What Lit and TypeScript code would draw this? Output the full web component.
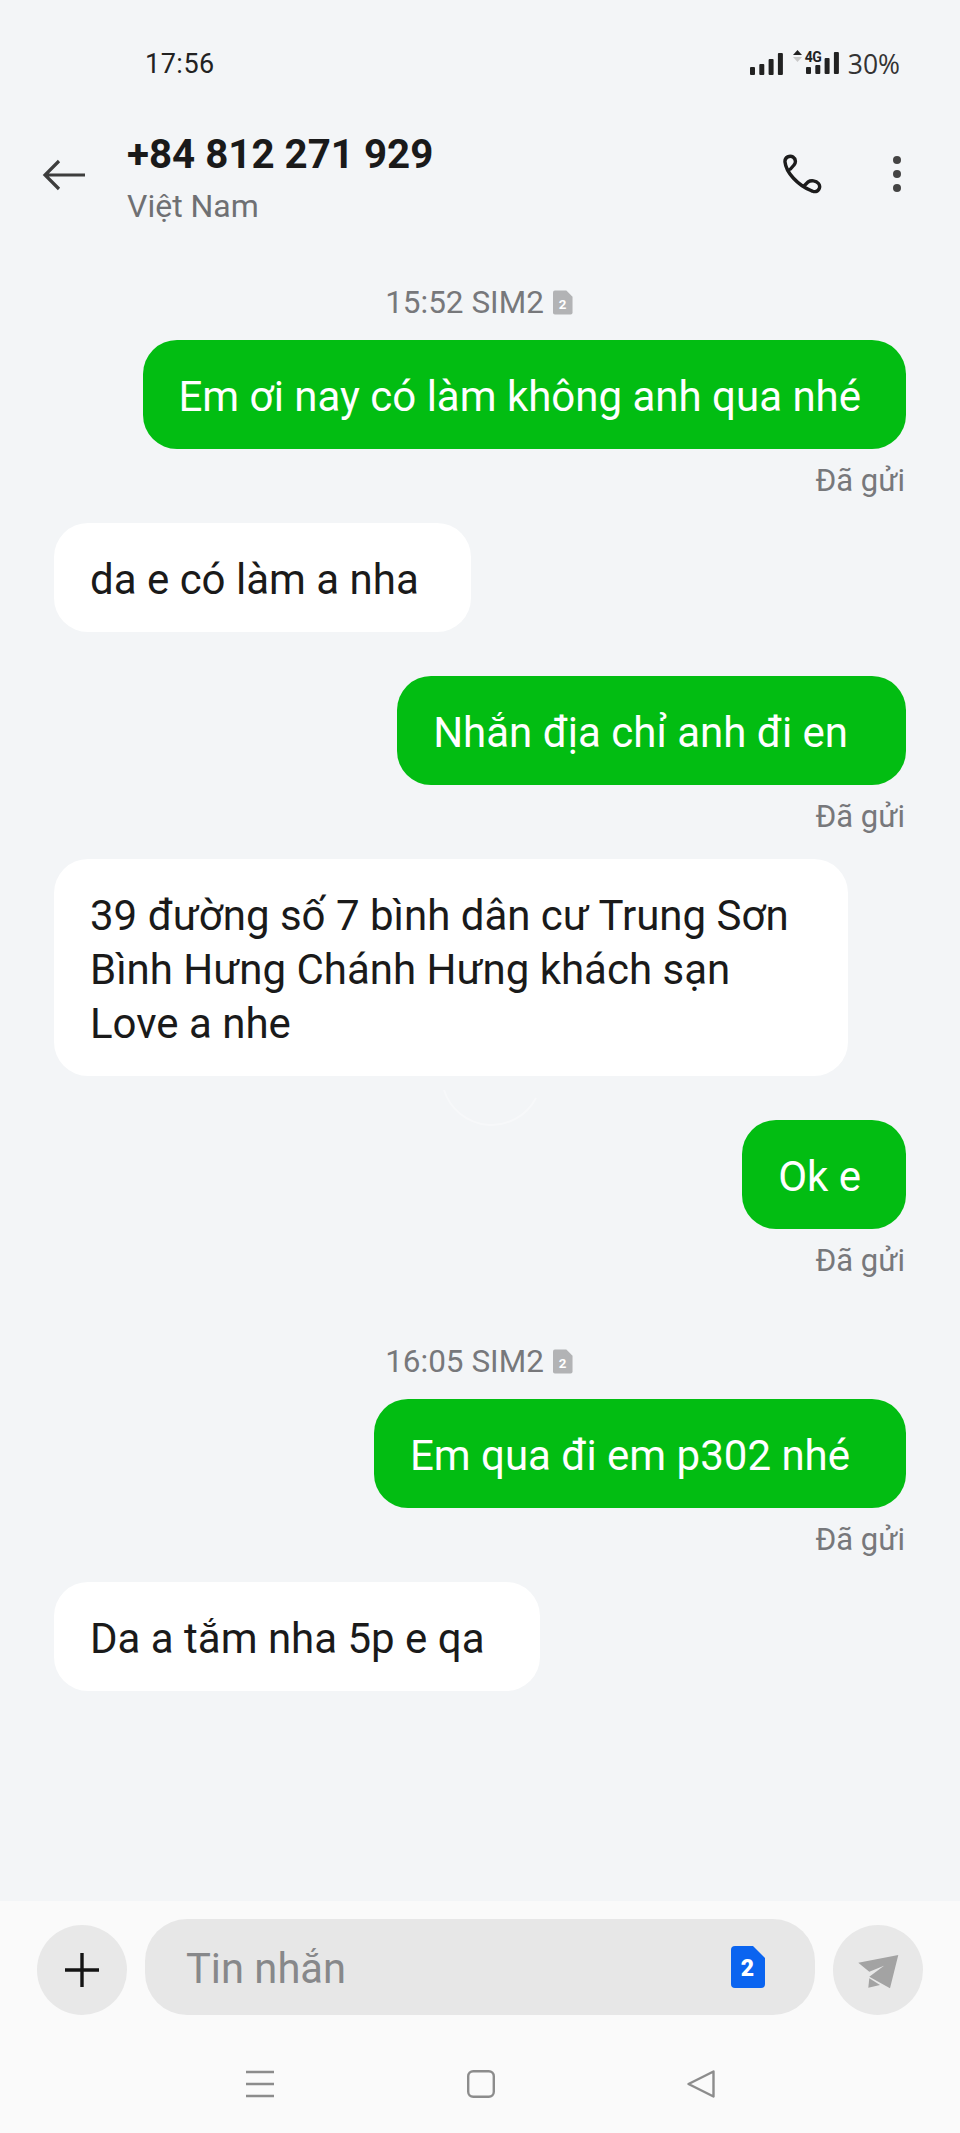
import { LitElement, html, css, svg } from "lit";
import { customElement } from "lit/decorators.js";

type Row =
  | { t: "time"; text: string; gap: number }
  | { t: "out" | "in"; text: string; gap: number; pad: number };

const rows: Row[] = [
  { t: "time", text: "15:52 SIM2", gap: 63 },
  { t: "out", text: "Em ơi nay có làm không anh qua nhé", gap: 21, pad: 45 },
  { t: "in", text: "da e có làm a nha", gap: 25, pad: 52 },
  { t: "out", text: "Nhắn địa chỉ anh đi en", gap: 44, pad: 58 },
  { t: "in", text: "39 đường số 7 bình dân cư Trung Sơn\nBình Hưng Chánh Hưng khách sạn\nLove a nhe", gap: 25, pad: 59 },
  { t: "out", text: "Ok e", gap: 44, pad: 45 },
  { t: "time", text: "16:05 SIM2", gap: 66 },
  { t: "out", text: "Em qua đi em p302 nhé", gap: 21, pad: 56 },
  { t: "in", text: "Da a tắm nha 5p e qa", gap: 25, pad: 55 },
];

const bars = (h: number[]) => svg`${h.map(
  (v, i) => svg`<rect x=${i * 9.3} y=${22 - v} width="5" height=${v} rx="1" fill="#222"></rect>`
)}`;

@customElement("app-root")
export class AppRoot extends LitElement {
  static styles = css`
    :host {
      display: flex;
      flex-direction: column;
      position: relative;
      width: 960px;
      height: 2133px;
      overflow: hidden;
      background: #f3f5f7;
      font-family: Roboto, "Liberation Sans", sans-serif;
      color: #1a1a1a;
    }
    .status {
      display: flex;
      align-items: center;
      justify-content: space-between;
      height: 28px;
      margin-top: 50px;
      padding: 0 60px 0 145px;
      flex: none;
    }
    .clock { font-size: 27px; color: #222; letter-spacing: 0.5px; }
    .indicators { display: flex; align-items: center; }
    .batt { font-size: 26.500px; color: #333; margin-left: 11px; font-family: "Open Sans", sans-serif; }
    .net { position: relative; width: 54px; height: 26px; }
    .net .cell { position: absolute; left: 23px; top: 1px; }
    .arrows { position: absolute; left: 10px; top: -1px; }
    .four { position: absolute; left: 22px; top: -2px; font: 700 14px/16px Roboto, sans-serif; color: #222; letter-spacing: -0.5px; }
    .head {
      display: flex;
      align-items: flex-start;
      height: 90px;
      margin-top: 54px;
      padding: 0 55px 0 42px;
      flex: none;
    }
    .back { margin-top: 26px; width: 44px; height: 34px; margin-right: 41px; flex: none; }
    .who { flex: 1; }
    .who h1 { margin: 0; font-size: 40.300px; line-height: 46px; font-weight: 700; color: #1a1a1a; }
    .who p { margin: 9px 0 0; font-size: 32px; line-height: 38px; color: #6f7073; }
    .phone { width: 42px; height: 42px; margin-top: 22px; margin-right: 69px; }
    .dots { width: 12px; margin-top: 24px; display: flex; flex-direction: column; gap: 6px; }
    .dots i { display: block; width: 8px; height: 8px; border-radius: 50%; background: #444; }
    .thread {
      flex: 1;
      display: flex;
      flex-direction: column;
      padding: 0 54px;
    }
    .spacer { flex: none; }
    .stamp {
      display: flex;
      justify-content: center;
      align-items: center;
      gap: 9px;
      height: 34px;
      padding-right: 2px;
      font-size: 31.500px;
      color: #77787b;
    }
    .row { display: flex; flex-direction: column; }
    .row.out { align-items: flex-end; }
    .row.in { align-items: flex-start; }
    .bubble {
      box-sizing: border-box;
      border-radius: 34px;
      padding: 30px 36px 25px;
      font-size: 42px;
      line-height: 54px;
      white-space: pre-line;
    }
    .out .bubble { background: #02bd12; color: #fff; }
    .in .bubble { background: #fff; color: #1a1a1a; }
    .sent { font-size: 31px; line-height: 34px; color: #77787b; margin: 15px 1px 0 0; }
    .composer {
      background: #fafafa;
      height: 232px;
      box-sizing: border-box;
      padding: 18px 37px 0;
      flex: none;
    }
    .bar { display: flex; align-items: flex-end; gap: 18px; height: 96px; }
    .round {
      flex: none;
      width: 90px;
      height: 90px;
      border-radius: 50%;
      background: #e8e8e8;
      display: grid;
      place-items: center;
    }
    .field {
      flex: 1;
      height: 96px;
      border-radius: 42px;
      background: #e7e7e7;
      display: flex;
      align-items: center;
      justify-content: space-between;
      padding: 0 50px 0 41px;
      font-size: 41.700px;
      color: #87888a;
    }
    .field span { padding-top: 2px; }
    .nav {
      display: flex;
      justify-content: center;
      gap: 192px;
      margin-top: 55px;
      align-items: center;
    }
    .mark { position: absolute; left: 440px; top: 1078px; pointer-events: none; }
  `;

  private simGrey() {
    return html`<svg width="20" height="25" viewBox="0 0 21 25">
      <path d="M2 0h12l6.500 6.500V23a2 2 0 0 1-2 2H2a2 2 0 0 1-2-2V2a2 2 0 0 1 2-2z" fill="#b2b3b5"></path>
      <text x="10" y="19" text-anchor="middle" font-family="Roboto" font-weight="700" font-size="14" fill="#fff">2</text>
    </svg>`;
  }

  private renderRow(r: Row) {
    if (r.t === "time") {
      return html`<div class="stamp">${r.text}${this.simGrey()}</div>`;
    }
    return html`<div class="row ${r.t}">
      <div class="bubble" style="padding-right:${r.pad}px">${r.text}</div>
      ${r.t === "out" ? html`<div class="sent">Đã gửi</div>` : ""}
    </div>`;
  }

  render() {
    return html`
      <div class="status">
        <span class="clock">17:56</span>
        <div class="indicators">
          <svg width="33" height="22" viewBox="0 0 33 22">${bars([8, 11, 16, 22])}</svg>
          <div class="net">
            <svg class="arrows" width="9" height="16" viewBox="0 0 9 16">
              <path d="M4.500 0 9 5H0z" fill="#222"></path>
              <path d="M0 7h9l-4.500 5z" fill="#c9c9c9"></path>
            </svg>
            <span class="four">4G</span>
            <svg class="cell" width="33" height="22" viewBox="0 0 33 22">${bars([7, 9, 16, 22])}</svg>
          </div>
          <span class="batt">30%</span>
        </div>
      </div>
      <div class="head">
        <svg class="back" viewBox="0 0 44 34" fill="none" stroke="#3d3d3d" stroke-width="3.200">
          <path d="M43 17H3M17 3 3 17l14 14"></path>
        </svg>
        <div class="who">
          <h1>+84 812 271 929</h1>
          <p>Việt Nam</p>
        </div>
        <svg class="phone" viewBox="0 0 42 42" fill="none" stroke="#1c1c1c" stroke-width="3.400" stroke-linejoin="round" stroke-linecap="round">
          <path d="M3 8C4 18 15 31 30 37M3 8C2.500 3 8 1 11 3 14 5 14 9 12 11L8.500 15M22 32 26 28C29 26 34 26.500 36.500 29.500 39 32.500 37 37 34 37.500 32 38 31 37.300 30 37"></path>
        </svg>
        <div class="dots"><i></i><i></i><i></i></div>
      </div>
      <div class="thread">
        ${rows.map(
          (r) => html`<div class="spacer" style="height:${r.gap}px"></div>${this.renderRow(r)}`
        )}
      </div>
      <div class="composer">
        <div class="bar">
          <div class="round">
            <svg width="36" height="36" viewBox="0 0 36 36" stroke="#141414" stroke-width="3.400">
              <path d="M18 1v34M1 18h34"></path>
            </svg>
          </div>
          <div class="field">
            <span>Tin nhắn</span>
            <svg width="34" height="42" viewBox="0 0 34 42">
              <path d="M4 0h18l12 12v26a4 4 0 0 1-4 4H4a4 4 0 0 1-4-4V4a4 4 0 0 1 4-4z" fill="#0a64f0"></path>
              <text x="16.500" y="30" text-anchor="middle" font-family="Roboto" font-weight="900" font-size="23" fill="#fff">2</text>
            </svg>
          </div>
          <div class="round">
            <svg width="42" height="37" viewBox="0 0 42 37" fill="#a3a3a3">
              <path d="M41.300 3 1.300 10.700 12.300 19.700 27 13.700 12.300 24.700 33 36.300Z"></path>
              <path d="M12.300 26.300 23 33 11.300 35.700Z"></path>
            </svg>
          </div>
        </div>
        <div class="nav">
          <svg width="30" height="28" viewBox="0 0 30 28" stroke="#8c8c8c" stroke-width="2.400">
            <path d="M1 2h28M1 14h28M1 26h28"></path>
          </svg>
          <svg width="28" height="28" viewBox="0 0 28 28" fill="none" stroke="#8c8c8c" stroke-width="2.400">
            <rect x="1.200" y="1.200" width="25.600" height="25.600" rx="5"></rect>
          </svg>
          <svg width="28" height="28" viewBox="0 0 28 28" fill="none" stroke="#8c8c8c" stroke-width="2.400" stroke-linejoin="round">
            <path d="M26.500 1.500 1.500 14l25 12.500z"></path>
          </svg>
        </div>
      </div>
      <svg class="mark" width="110" height="55" viewBox="0 0 110 55" fill="none" stroke="#fff" stroke-opacity=".35" stroke-width="2">
        <path d="M4 12a50 50 0 0 0 92 8"></path>
      </svg>
    `;
  }
}
